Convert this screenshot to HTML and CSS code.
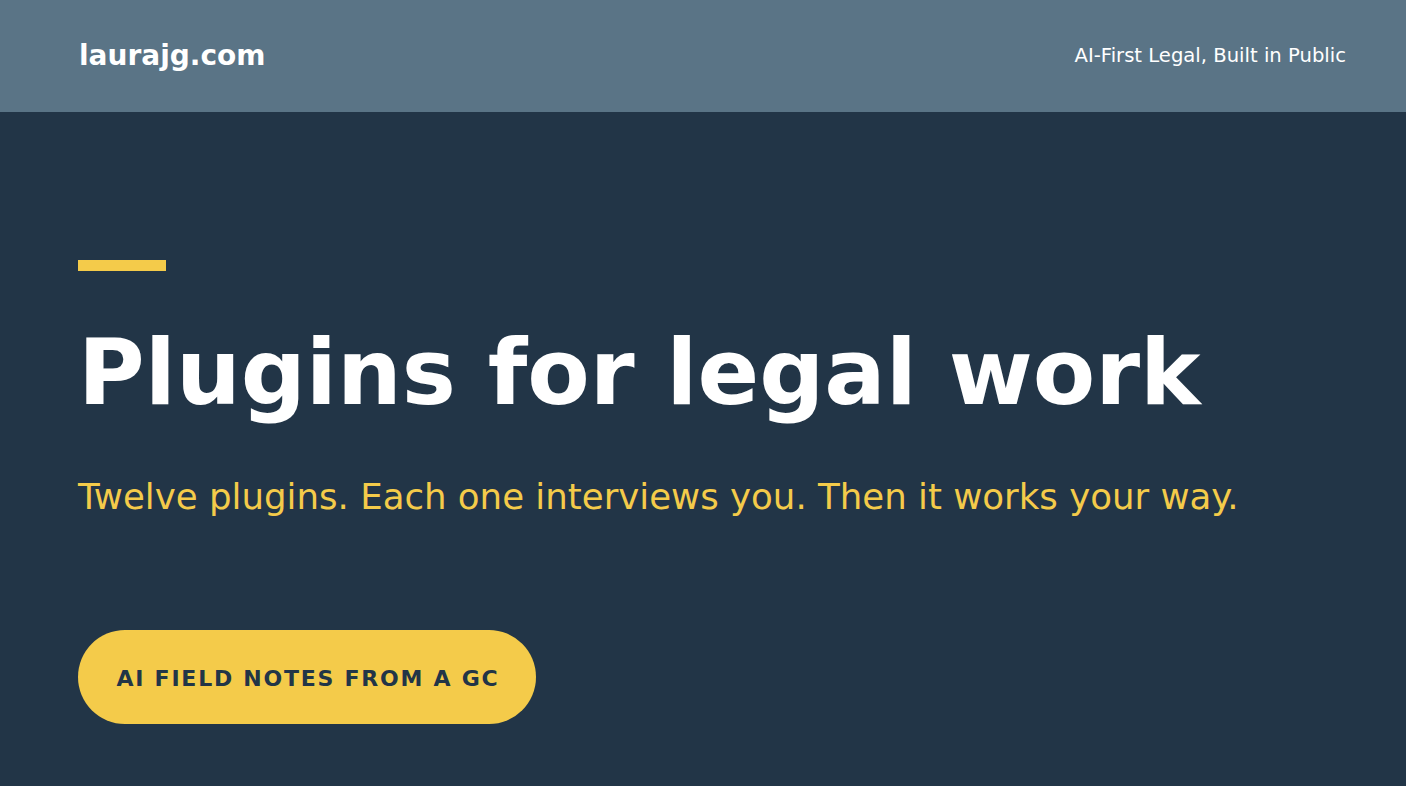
FILE: index.html
```html
<!DOCTYPE html>
<html lang="en">
<head>
<meta charset="utf-8">
<title>laurajg.com</title>
<link rel="stylesheet" href="styles.css">
</head>
<body>
<header class="site-header">
  <a class="logo" href="#">laurajg.com</a>
  <span class="tagline">AI-First Legal, Built in Public</span>
</header>
<main class="hero">
  <div class="accent-bar"></div>
  <h1 class="hero-title">Plugins for legal work</h1>
  <p class="hero-sub">Twelve plugins. Each one interviews you. Then it works your way.</p>
  <a class="hero-btn" href="#">AI Field Notes from a GC</a>
</main>
</body>
</html>
```
FILE: styles.css
```css
* { box-sizing: border-box; }
html, body {
  margin: 0;
  padding: 0;
  height: 100%;
}
body {
  font-family: "DejaVu Sans", sans-serif;
  background: #223547;
  color: #ffffff;
}
.site-header {
  height: 112px;
  background: #5a7486;
  display: flex;
  align-items: center;
  justify-content: space-between;
  padding: 0 60px 2px 79px;
}
.logo {
  color: #ffffff;
  text-decoration: none;
  font-weight: 700;
  font-size: 28px;
}
.tagline {
  color: #ffffff;
  font-size: 19.6px;
}
.hero {
  padding: 148px 78px 0 78px;
  display: flex;
  flex-direction: column;
  align-items: flex-start;
}
.accent-bar {
  width: 88px;
  height: 11px;
  background: #f4cb4a;
}
.hero-title {
  margin: 52px 0 0 0;
  font-size: 91px;
  font-weight: 700;
  line-height: 1.1;
  color: #ffffff;
}
.hero-sub {
  margin: 51px 0 0 0;
  font-size: 35.6px;
  line-height: 1.3;
  color: #f4cb4a;
}
.hero-btn {
  margin-top: 110px;
  display: inline-flex;
  align-items: center;
  justify-content: center;
  width: 458px;
  height: 94px;
  border-radius: 47px;
  background: #f4cb4a;
  color: #223547;
  text-decoration: none;
  text-transform: uppercase;
  font-weight: 700;
  font-size: 22px;
  letter-spacing: 0.08em;
  padding: 2px 0 0 2px;
}
```
